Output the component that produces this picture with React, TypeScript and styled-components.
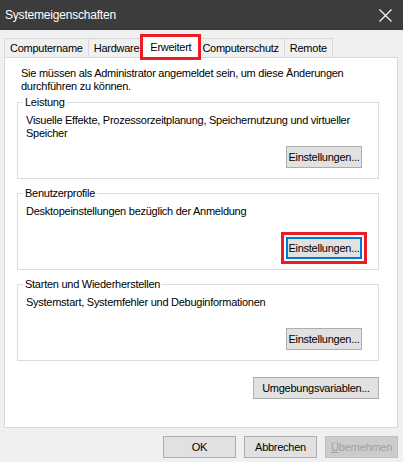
import React from "react";
import styled, { createGlobalStyle, css } from "styled-components";

const GlobalStyle = createGlobalStyle`
  html, body { margin: 0; padding: 0; background: #f0f0f0; }
  body { font-family: "Liberation Sans", Arial, sans-serif; font-size: 11px; letter-spacing: -0.26px; color: #000; }
  * { box-sizing: border-box; }
`;

const Window = styled.div`
  width: 403px;
  height: 462px;
  display: flex;
  flex-direction: column;
  background: #f0f0f0;
  overflow: hidden;
`;

const TitleBar = styled.div`
  height: 30px;
  flex: none;
  background: #3c3c3c;
  color: #fff;
  display: flex;
  align-items: center;
  justify-content: space-between;
  padding: 0 11px 0 5px;
  font-size: 12px;
  letter-spacing: -0.2px;
`;

const Body = styled.div`
  flex: 1;
  display: flex;
  flex-direction: column;
  padding: 5px 5px 0 4px;
`;

const TabStrip = styled.div`
  display: flex;
  align-items: flex-end;
  height: 22px;
  position: relative;
  z-index: 1;
`;

const Tab = styled.div<{ $active?: boolean }>`
  height: 19px;
  padding: 0 5px;
  display: flex;
  align-items: center;
  border: 1px solid #d9d9d9;
  border-bottom: none;
  background: #f0f0f0;
  margin-left: -1px;
  &:first-child { margin-left: 0; }
  ${(p) =>
    p.$active &&
    css`
      height: 22px;
      margin: 0 -2px -1px -3px;
      padding: 0 7px 2px 7px;
      background: #fff;
      position: relative;
      z-index: 2;
      outline: 3px solid #ed1c24;
      outline-offset: -1px;
    `}
`;

const Panel = styled.div`
  height: 371px;
  background: #fff;
  border: 1px solid #d9d9d9;
  padding: 9px 18px 0 12px;
  display: flex;
  flex-direction: column;
  align-items: stretch;
`;

const Intro = styled.div`
  margin-left: 4px;
  line-height: 13px;
`;

const Group = styled.fieldset`
  margin: 8px 0 0 0;
  min-width: 0;
  border: 1px solid #dcdcdc;
  padding: 0 16px 10px 8px;
  &:first-of-type { margin-top: 3px; }
`;

const Legend = styled.legend`
  padding: 0 2px;
  margin-left: -3px;
  line-height: 13px;
`;

const GroupBody = styled.div`
  height: 59px;
  padding-top: 5px;
  display: flex;
  flex-direction: column;
  justify-content: space-between;
`;

const GroupText = styled.div`
  line-height: 12.5px;
`;

const ButtonRow = styled.div`
  display: flex;
  justify-content: flex-end;
`;

const Button = styled.button<{ $w?: number; $focus?: boolean; $marked?: boolean }>`
  width: ${(p) => p.$w ?? 76}px;
  height: 22px;
  padding: 0;
  background: #e1e1e1;
  border: 1px solid #adadad;
  font-family: "Liberation Sans", Arial, sans-serif;
  font-size: 11px;
  letter-spacing: -0.26px;
  color: #000;
  ${(p) =>
    p.$focus &&
    css`
      border-color: #0078d7;
      box-shadow: inset 0 0 0 1px #0078d7;
    `}
  ${(p) =>
    p.$marked &&
    css`
      outline: 3px solid #ed1c24;
      outline-offset: 2px;
    `}
  &:disabled {
    background: #cccccc;
    border-color: #bfbfbf;
    color: #a0a0a0;
  }
`;

const EnvRow = styled.div`
  margin-top: 16px;
  display: flex;
  justify-content: flex-end;
`;

const Footer = styled.div`
  display: flex;
  justify-content: flex-end;
  gap: 8px;
  padding: 8px 0 0 0;
`;

const Mnemonic = styled.span`
  text-decoration: underline;
`;

function CloseIcon() {
  return (
    <svg width="13" height="13" viewBox="0 0 13 13">
      <path d="M0.5 0.5 L12.5 12.5 M12.5 0.5 L0.5 12.5" stroke="#fff" strokeWidth="1.1" fill="none" />
    </svg>
  );
}

const groups = [
  {
    title: "Leistung",
    text: "Visuelle Effekte, Prozessorzeitplanung, Speichernutzung und virtueller Speicher",
    marked: false,
  },
  {
    title: "Benutzerprofile",
    text: "Desktopeinstellungen bezüglich der Anmeldung",
    marked: true,
  },
  {
    title: "Starten und Wiederherstellen",
    text: "Systemstart, Systemfehler und Debuginformationen",
    marked: false,
  },
];

export default function App() {
  return (
    <>
      <GlobalStyle />
      <Window>
        <TitleBar>
          <span>Systemeigenschaften</span>
          <CloseIcon />
        </TitleBar>
        <Body>
          <TabStrip>
            <Tab>Computername</Tab>
            <Tab>Hardware</Tab>
            <Tab $active>Erweitert</Tab>
            <Tab>Computerschutz</Tab>
            <Tab>Remote</Tab>
          </TabStrip>
          <Panel>
            <Intro>
              Sie müssen als Administrator angemeldet sein, um diese Änderungen
              <br />
              durchführen zu können.
            </Intro>
            {groups.map((g) => (
              <Group key={g.title}>
                <Legend>{g.title}</Legend>
                <GroupBody>
                  <GroupText>{g.text}</GroupText>
                  <ButtonRow>
                    <Button $focus={g.marked} $marked={g.marked}>
                      Einstellungen...
                    </Button>
                  </ButtonRow>
                </GroupBody>
              </Group>
            ))}
            <EnvRow>
              <Button $w={126}>Umgebungsvariablen...</Button>
            </EnvRow>
          </Panel>
          <Footer>
            <Button $w={73}>OK</Button>
            <Button $w={73}>Abbrechen</Button>
            <Button $w={73} disabled>
              <Mnemonic>Ü</Mnemonic>bernehmen
            </Button>
          </Footer>
        </Body>
      </Window>
    </>
  );
}
